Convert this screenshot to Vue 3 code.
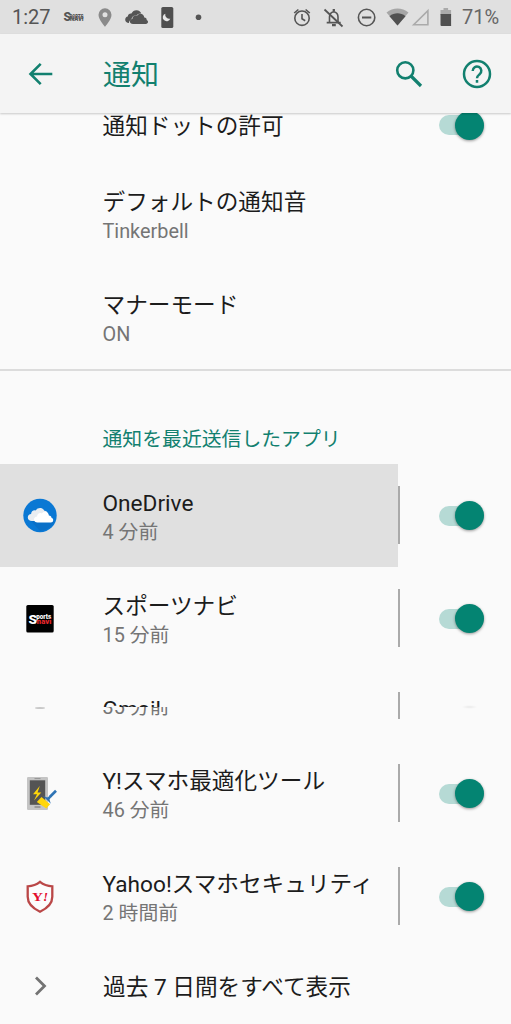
<script setup>
const apps = [
  { id: 'onedrive', name: 'OneDrive', time: '4 分前', pressed: true },
  { id: 'sports', name: 'スポーツナビ', time: '15 分前' },
  { id: 'gmail-top', name: 'Gmail', time: '35 分前', slice: 'upper' },
  { id: 'gmail', name: 'Gmail', time: '35 分前', slice: 'lower' },
  { id: 'optimizer', name: 'Y!スマホ最適化ツール', time: '46 分前' },
  { id: 'security', name: 'Yahoo!スマホセキュリティ', time: '2 時間前' },
]
const prefs = [
  { name: 'デフォルトの通知音', value: 'Tinkerbell' },
  { name: 'マナーモード', value: 'ON' },
]
</script>

<template>
  <div class="screen">
    <header class="status">
      <span class="clock">1:27</span>
      <svg class="status-icons" width="150" height="34" viewBox="60 0 150 34">
        <g fill="#555" font-family="Roboto, sans-serif" font-weight="900">
          <text x="63.500" y="21.300" font-size="12" textLength="7.500" lengthAdjust="spacingAndGlyphs">S</text>
          <text x="69.500" y="18.900" font-size="8" textLength="14" lengthAdjust="spacingAndGlyphs">PORTS</text>
          <text x="70" y="21.300" font-size="7.500" textLength="13.500" lengthAdjust="spacingAndGlyphs">NAVI</text>
        </g>
        <path fill="#8a8a8a" fill-rule="evenodd" d="M105 8.300a6.500 6.500 0 0 0-6.500 6.500c0 4.800 6.500 12 6.500 12s6.500-7.200 6.500-12A6.500 6.500 0 0 0 105 8.300zm0 4a2.500 2.500 0 1 1 0 5 2.500 2.500 0 0 1 0-5z" />
        <path fill="#555" d="M129 22.900c-2.300 0-3.800-1.300-3.800-3.200 0-1.700 1.100-2.800 2.600-3.100.1-2 1.700-3.200 3.600-3 1.100-2.200 3-3.400 5.200-3.300 2.400.1 4 1.400 4.700 3.300-1.900-.4-3.700.3-4.800 1.900-3-.5-5 1.500-5 3.900-1.800.7-2.600 1.900-2.500 3.500z" />
        <path fill="#555" d="M133 24c-1.900 0-3.100-1-3.100-2.500 0-1.400 1-2.400 2.500-2.500-.2-2.600 2.500-4.200 4.600-3.200 2.100-3.500 7-2.300 7.300 1.800 1.700 0 2.500 1.200 2.400 2.500 1.100.5 1.400 1.200 1.300 2 0 1.100-.9 1.900-2.200 1.900z" />
        <rect x="161.300" y="7" width="12" height="21" rx="1.600" fill="#4f4f4f" />
        <path fill="#e8e8e8" d="M165.300 13.700a3.900 3.900 0 1 0 5 5 4.200 4.200 0 0 1-5-5z" />
        <circle cx="198.500" cy="17.300" r="2.800" fill="#555" />
      </svg>
      <svg class="status-system" width="165" height="34" viewBox="290 0 165 34" fill="none" stroke="#555" stroke-width="1.600">
        <circle cx="302" cy="18.200" r="7.200" />
        <path d="M302 14v4.700l3.200 2M294.200 13l4.200-3.500M309.800 13l-4.200-3.500" />
        <path d="M329.500 22.500v-5.500c0-3 1.500-4.700 4.200-5.200 2.900.5 4.300 2.300 4.300 5.200v5.500M326.700 22.600h14" />
        <path d="M324.500 9.500l18 17" stroke-width="1.800" />
        <path d="M332 25.200h3.800M333.800 9v2.500" stroke-width="2.300" />
        <circle cx="366.600" cy="17.500" r="8.200" />
        <path d="M362 17.500h9.300" stroke-width="2" />
        <path fill="#a6a6a6" stroke="none" d="M386.500 12.500c6.500-5.500 15.500-5.500 22 0L397.500 25.500z" />
        <path fill="#505050" stroke="none" d="M389.500 16.200c4.800-3.800 11.200-3.800 16 0l-8 9.300z" />
        <path stroke="#aaa" d="M413.700 24.800h14.200V10.700z" />
        <path fill="#aaa" stroke="none" d="M440.500 15V9.900h3V8h4.600v1.900h3V15z" />
        <path fill="#505050" stroke="none" d="M440.500 14h10.600v12h-9.600q-1 0-1-1z" />
      </svg>
      <span class="battery">71%</span>
    </header>

    <div class="toolbar">
      <svg class="back" width="30" height="30" viewBox="0 0 30 30" fill="none" stroke="#12806f" stroke-width="2.600">
        <path d="M28.300 15H6.500M16.700 4.800L6.500 15l10.200 10.200" />
      </svg>
      <h1>通知</h1>
      <svg class="search" width="30" height="30" viewBox="0 0 30 30" fill="none" stroke="#12806f">
        <circle cx="11.300" cy="11.300" r="8.100" stroke-width="2.600" />
        <path d="M17 17l10 10" stroke-width="3.200" />
      </svg>
      <svg class="help" width="30" height="30" viewBox="0 0 30 30" fill="none" stroke="#12806f" stroke-width="2.500">
        <circle cx="15" cy="15" r="13" />
        <path d="M10.700 12a4.300 4.300 0 1 1 6.900 3.300C16 16.600 15 17.200 15 19.300M15 21v2.800" />
      </svg>
    </div>

    <main>
      <section class="dot-clip">
        <div class="single dot-row">
          <span class="title">通知ドットの許可</span>
          <span class="switch"><i></i></span>
        </div>
      </section>
      <div v-for="p in prefs" :key="p.name" class="row">
        <div class="entry">
          <span class="title">{{ p.name }}</span>
          <span class="sub">{{ p.value }}</span>
        </div>
      </div>
      <h2>通知を最近送信したアプリ</h2>
      <div v-for="a in apps" :key="a.id" class="slot" :class="a.slice">
        <div class="row">
          <div class="entry" :class="{ pressed: a.pressed }">
            <svg class="app-icon" width="36" height="36" viewBox="0 0 36 36">
              <template v-if="a.id === 'onedrive'">
                <circle cx="18" cy="17.500" r="16.700" fill="#0a78d4" />
                <path fill="#0a70c8" d="M9 23l9 10c7-.6 12-4.500 14-9.500L27 18z" />
                <path fill="#e9edf1" d="M10 23c-2.500 0-4.200-1.500-4.200-3.500s1.500-3.400 3.300-3.500c0-2.700 2.400-4.200 4.600-3.500 1.700-3 6.700-3.500 8.700.3 2 0 3 1.200 3.300 3L17 23z" />
                <path fill="#fff" d="M15.500 24.600c-2 0-3.500-1.200-3.500-3 0-1.700 1.300-2.900 3.100-3 0-3 2.600-4.300 4.700-3.200 2.200-3.200 7-1.700 7.100 2.200 1.700 0 2.600 1 2.700 2.400 1.200.3 1.700 1.100 1.600 2.300-.1 1.300-1 2.300-2.300 2.300z" />
              </template>
              <template v-else-if="a.id === 'sports'">
                <rect x="4.300" y="4" width="27.400" height="27.600" rx="1.500" fill="#000" />
                <g font-family="Roboto, sans-serif" font-weight="900">
                  <text x="6.600" y="22.800" font-size="13.500" fill="#fff" textLength="8.500" lengthAdjust="spacingAndGlyphs">S</text>
                  <text x="14.200" y="17.800" font-size="7.500" fill="#fff" textLength="15" lengthAdjust="spacingAndGlyphs">ports</text>
                  <text x="14.800" y="22.700" font-size="8" fill="#e3262b" textLength="14.500" lengthAdjust="spacingAndGlyphs">navi</text>
                </g>
              </template>
              <ellipse v-else-if="a.id === 'gmail'" cx="18" cy="35" rx="5" ry="1" fill="#c8c8c8" />
              <template v-else-if="a.id === 'optimizer'">
                <rect x="5" y="1" width="21" height="33" rx="1.200" fill="#c4c4c4" />
                <rect x="7.800" y="4.300" width="15.400" height="24.500" fill="#545454" />
                <path d="M12.500 2.600h6" stroke="#888" stroke-width=".8" />
                <rect x="12.500" y="30" width="6" height="2" fill="#999" />
                <path fill="#ffd60a" d="M17.800 10L11 18.300h4L12 24.500l7.300-8H15.500z" />
                <path d="M34 14.700l-6 6" stroke="#2f74b5" stroke-width="2.700" />
                <path fill="#2f74b5" d="M21 20l4.300 1.400 3.200-2.200 1.200 1.200-2.200 3.200 1.300 4.200z" />
                <path fill="#ffd60a" d="M19.500 21l8.600 7.300-3.800 4.200-9.500-6.500z" />
              </template>
              <template v-else-if="a.id === 'security'">
                <path d="M18 2.800C14 6 10 7 5.700 7.300v10.500c0 7 5.300 11.700 12.300 14.900 7-3.200 12.300-7.900 12.300-14.900V7.300C26 7 22 6 18 2.800z" fill="#fcfcfc" stroke="#ba4747" stroke-width="2.300" />
                <text x="10" y="22" font-family="Liberation Serif, serif" font-weight="bold" font-size="13" fill="#e30d2d" textLength="11" lengthAdjust="spacingAndGlyphs">Y</text>
                <text x="21" y="22" font-family="Liberation Serif, serif" font-weight="bold" font-style="italic" font-size="13" fill="#e30d2d">!</text>
              </template>
            </svg>
            <span class="title">{{ a.name }}</span>
            <span class="sub">{{ a.time }}</span>
          </div>
          <span class="rule"></span>
          <span class="switch"><i></i></span>
        </div>
      </div>
      <div class="single">
        <svg class="chevron" width="20" height="24" viewBox="0 0 20 24" fill="none" stroke="#737373" stroke-width="2.800">
          <path d="M6 3.500l8.500 8.500L6 20.500" />
        </svg>
        <span class="title">過去 7 日間をすべて表示</span>
      </div>
    </main>
  </div>
</template>

<style>
body { margin: 0; }
</style>

<style scoped>
.screen {
  display: flex;
  flex-direction: column;
  width: 511px;
  height: 1024px;
  overflow: hidden;
  background: #fafafa;
  color: #1c1c1c;
  font-family: Roboto, "Noto Sans CJK JP", sans-serif;
}
.status {
  display: flex;
  align-items: center;
  flex: none;
  height: 34px;
  background: #e0e0e0;
  color: #555;
  font-size: 20px;
  line-height: 37px;
}
.clock { width: 48px; padding-left: 12px; }
.status-system { margin-left: 80px; }
.battery { margin-left: 7px; color: #666; }
.toolbar {
  position: relative;
  z-index: 1;
  display: flex;
  align-items: center;
  flex: none;
  height: 79px;
  background: #f4f4f4;
  box-shadow: 0 1px 2px rgba(0, 0, 0, 0.2);
  color: #12806f;
}
.back { margin-left: 24px; }
h1 { flex: 1; margin: 0 0 0 49px; padding-top: 5px; font-size: 28px; font-weight: 400; line-height: 40px; }
.search { margin-right: 38px; }
.help { margin-right: 19px; }
main { display: flex; flex-direction: column; flex: none; }
.dot-clip { display: flex; align-items: flex-end; height: 50px; overflow: hidden; }
.single { display: flex; align-items: center; flex: none; box-sizing: border-box; width: 511px; height: 76px; padding-left: 102.500px; }
.single .title { padding-top: 4px; }
.dot-row .switch { margin-left: auto; margin-right: 27.500px; }
.chevron { margin: 0 53px 0 -72.500px; }
.title { font-size: 22.650px; line-height: 30px; white-space: nowrap; }
.sub { font-size: 19.850px; line-height: 28px; color: #757575; white-space: nowrap; }
.row { display: flex; align-items: center; flex: none; width: 511px; height: 103px; }
.entry {
  display: grid;
  grid-template-columns: 79.500px auto;
  grid-template-rows: 30px 28px;
  align-content: center;
  box-sizing: border-box;
  width: 398px;
  height: 103px;
  padding: 5px 0 0 23px;
}
.entry .title, .entry .sub { grid-column: 2; }
.app-icon { grid-row: 1 / 3; align-self: center; margin: -5px 0 0 -1px; }
.pressed { background: #e0e0e0; }
.rule { width: 2px; height: 58px; margin-top: -1px; background: #aaa; }
.switch {
  display: flex;
  justify-content: flex-end;
  align-items: center;
  width: 45px;
  height: 20px;
  margin-left: 38.500px;
  border-radius: 10px;
  background: #b6dad5;
}
.switch i { width: 29px; height: 29px; flex: none; border-radius: 50%; background: #048472; box-shadow: 0 1px 3px rgba(0, 0, 0, 0.4); }
h2 {
  flex: none;
  box-sizing: border-box;
  height: 95px;
  margin: 0;
  padding: 55px 0 0 102.500px;
  border-top: 2px solid #dcdcdc;
  color: #12806f;
  font-size: 19.850px;
  font-weight: 400;
  line-height: 28px;
}
.slot { display: flex; align-items: flex-start; flex: none; overflow: hidden; }
.upper { height: 37px; }
.lower { height: 35px; align-items: flex-end; }
</style>
